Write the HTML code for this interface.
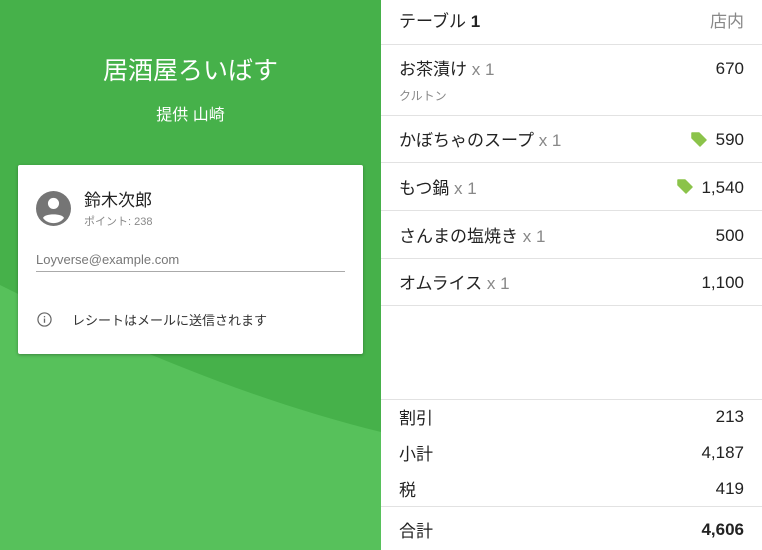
<!DOCTYPE html>
<html><head><meta charset="utf-8"><style>
*{margin:0;padding:0;box-sizing:border-box}
body{width:762px;height:550px;overflow:hidden;font-family:"Liberation Sans","Noto Sans CJK JP",sans-serif;position:relative;background:#fff}
.left{position:absolute;left:0;top:0;width:381px;height:550px;background:#46b14a;overflow:hidden}
.t{position:absolute;white-space:nowrap}
.card{position:absolute;left:18px;top:165px;width:345px;height:189px;background:#fff;border-radius:2px;box-shadow:0 1px 3px rgba(0,0,0,.3)}
.line{position:absolute;left:381px;width:381px;height:1px;background:#e2e2e2}
.r{font-size:17px;color:#222}
.q{color:#888}
.amt{right:18px;text-align:right}
</style></head><body>
<div class="left">
<svg width="381" height="550" style="position:absolute;left:0;top:0"><path d="M0,285 C120,345 250,400 381,432 L381,550 L0,550 Z" fill="#57c15b"/></svg>
<div class="t" style="left:0;width:381px;text-align:center;top:51px;font-size:25px;color:#fff">居酒屋ろいばす</div>
<div class="t" style="left:0;width:381px;text-align:center;top:101px;font-size:16px;color:#fff">提供 山崎</div>
<div class="card">
<svg style="position:absolute;left:18px;top:26px" width="35" height="35" viewBox="0 0 24 24"><circle cx="12" cy="12" r="12" fill="#757575"/><circle cx="12" cy="8.5" r="3.8" fill="#fff"/><path d="M4.8,18.5 C6,15.2 18,15.2 19.2,18.5 C17.5,20.8 15,22 12,22 C9,22 6.5,20.8 4.8,18.5Z" fill="#fff"/></svg>
<div class="t" style="left:66px;top:21px;font-size:17px;color:#222">鈴木次郎</div>
<div class="t" style="left:66px;top:48px;font-size:11px;color:#888">ポイント: 238</div>
<div class="t" style="left:18px;top:87px;font-size:13px;color:#777">Loyverse@example.com</div>
<div style="position:absolute;left:18px;top:106px;width:309px;height:1px;background:#aaa"></div>
<svg style="position:absolute;left:19px;top:147px" width="15" height="15" viewBox="0 0 16 16"><circle cx="8" cy="8" r="7" fill="none" stroke="#666" stroke-width="1.3"/><rect x="7.3" y="7" width="1.4" height="4.5" fill="#666"/><rect x="7.3" y="4.3" width="1.4" height="1.4" fill="#666"/></svg>
<div class="t" style="left:54px;top:145px;font-size:13px;color:#333">レシートはメールに送信されます</div>
</div>
</div>

<div class="t r" style="left:399px;top:7px">テーブル <b>1</b></div>
<div class="t r amt" style="top:7px;color:#888">店内</div>
<div class="line" style="top:44px"></div>

<div class="t r" style="left:399px;top:55px">お茶漬け<span class="q"> x 1</span></div>
<div class="t r amt" style="top:59px">670</div>
<div class="t" style="left:399px;top:87px;font-size:12px;color:#888">クルトン</div>
<div class="line" style="top:115px"></div>

<div class="t r" style="left:399px;top:126px">かぼちゃのスープ<span class="q"> x 1</span></div>
<div class="t r amt" style="top:130px">590</div>
<svg style="position:absolute;left:691px;top:132px" width="16" height="15" viewBox="0 0 16 15"><path d="M1,1 L8,1 L15,8 L9,14 L1,6 Z" fill="#8bc34a" stroke="#8bc34a" stroke-linejoin="round" stroke-width="1.5"/></svg>
<div class="line" style="top:162px"></div>

<div class="t r" style="left:399px;top:174px">もつ鍋<span class="q"> x 1</span></div>
<div class="t r amt" style="top:178px">1,540</div>
<svg style="position:absolute;left:677px;top:179px" width="16" height="15" viewBox="0 0 16 15"><path d="M1,1 L8,1 L15,8 L9,14 L1,6 Z" fill="#8bc34a" stroke="#8bc34a" stroke-linejoin="round" stroke-width="1.5"/></svg>
<div class="line" style="top:210px"></div>

<div class="t r" style="left:399px;top:222px">さんまの塩焼き<span class="q"> x 1</span></div>
<div class="t r amt" style="top:226px">500</div>
<div class="line" style="top:258px"></div>

<div class="t r" style="left:399px;top:269px">オムライス<span class="q"> x 1</span></div>
<div class="t r amt" style="top:273px">1,100</div>
<div class="line" style="top:305px"></div>

<div class="line" style="top:399px"></div>
<div class="t r" style="left:399px;top:404px">割引</div>
<div class="t r amt" style="top:407px">213</div>
<div class="t r" style="left:399px;top:440px">小計</div>
<div class="t r amt" style="top:443px">4,187</div>
<div class="t r" style="left:399px;top:476px">税</div>
<div class="t r amt" style="top:479px">419</div>
<div class="line" style="top:506px"></div>
<div class="t r" style="left:399px;top:517px">合計</div>
<div class="t r amt" style="top:520px;font-weight:bold">4,606</div>
</body></html>
